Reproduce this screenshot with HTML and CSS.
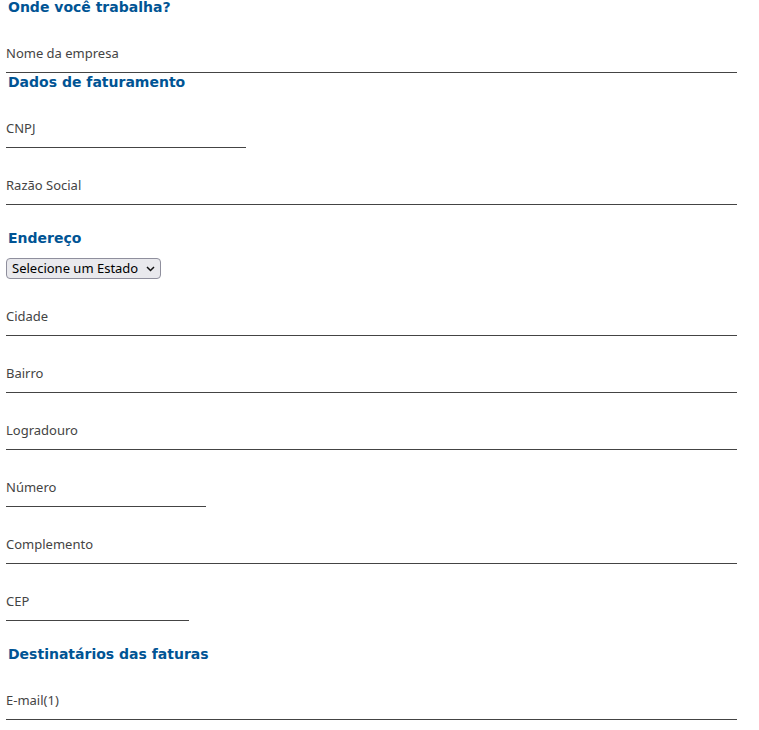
FILE: index.html
```
<!DOCTYPE html>
<html lang="pt-BR">
<head>
<meta charset="utf-8">
<title>Cadastro</title>
<link rel="stylesheet" href="styles.css">
</head>
<body>
<form class="form">
  <h2 class="title title-first">Onde você trabalha?</h2>
  <input class="field" type="text" placeholder="Nome da empresa">
  <h2 class="title title-tight">Dados de faturamento</h2>
  <input class="field field-cnpj" type="text" placeholder="CNPJ">
  <input class="field" type="text" placeholder="Razão Social">
  <h2 class="title">Endereço</h2>
  <div class="select-wrap">
    <select class="state">
      <option>Selecione um Estado</option>
    </select>
    <svg class="chevron" width="9" height="6" viewBox="0 0 9 6" aria-hidden="true"><path d="M1 1 L4.5 4.5 L8 1" fill="none" stroke="#111" stroke-width="1.5"/></svg>
  </div>
  <input class="field" type="text" placeholder="Cidade">
  <input class="field" type="text" placeholder="Bairro">
  <input class="field" type="text" placeholder="Logradouro">
  <input class="field field-num" type="text" placeholder="Número">
  <input class="field" type="text" placeholder="Complemento">
  <input class="field field-cep" type="text" placeholder="CEP">
  <h2 class="title">Destinatários das faturas</h2>
  <input class="field" type="text" placeholder="E-mail(1)">
</form>
</body>
</html>
```
FILE: styles.css
```
html, body {
  margin: 0;
  padding: 0;
  background: #fff;
}
.form {
  display: flex;
  flex-direction: column;
  align-items: flex-start;
  padding: 0 22px 0 6px;
  margin-top: -2px;
}
.title {
  margin: 24px 0 0;
  padding-left: 2px;
  font-family: "DejaVu Sans", sans-serif;
  font-weight: bold;
  font-size: 14px;
  line-height: 18px;
  color: #005494;
}
.title-first { margin-top: 0; }
.title-tight { margin-top: 0; }
.field {
  display: block;
  box-sizing: border-box;
  width: 731px;
  height: 41px;
  margin: 16px 0 0;
  padding: 1px 0 0;
  border: 0;
  border-bottom: 1px solid #444;
  background: transparent;
  font-family: "Noto Sans", "Open Sans", sans-serif;
  font-size: 13px;
  color: #333;
  outline: none;
}
.field::placeholder {
  color: #444;
  opacity: 1;
}
.field-cnpj { width: 240px; }
.field-num { width: 200px; }
.field-cep { width: 183px; }
.select-wrap {
  position: relative;
  margin: 11px 0 0;
}
.state {
  display: block;
  appearance: none;
  -webkit-appearance: none;
  box-sizing: border-box;
  width: 155px;
  height: 21px;
  font-family: "Noto Sans", sans-serif;
  font-size: 13px;
  line-height: 19px;
  color: #000;
  border: 1px solid #8f8f9d;
  border-radius: 4px;
  background: #e9e9ed;
  padding: 0 20px 0 5px;
}
.chevron {
  position: absolute;
  left: 140px;
  top: 8px;
  pointer-events: none;
}
```
